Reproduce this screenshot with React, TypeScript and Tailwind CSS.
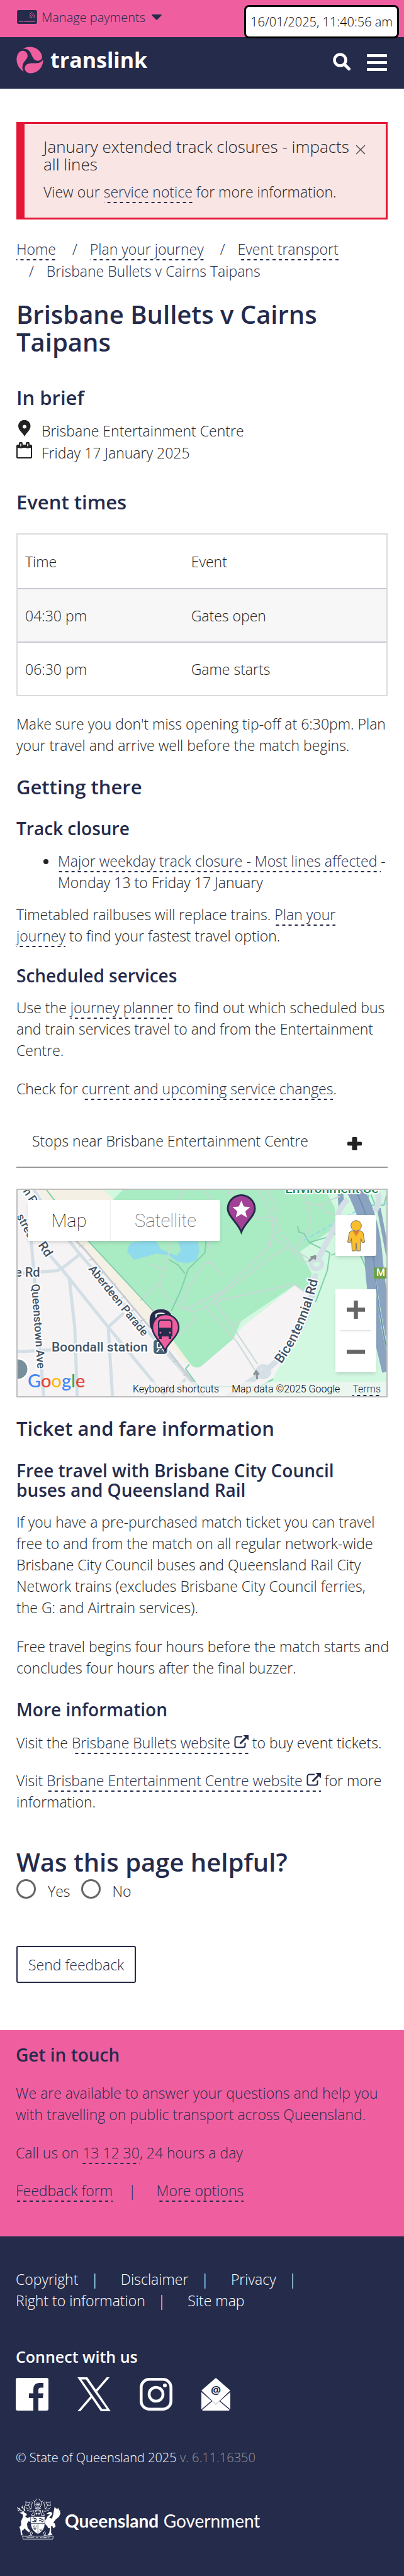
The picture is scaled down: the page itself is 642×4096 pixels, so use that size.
import type { AnchorHTMLAttributes, ReactNode } from "react";

const H2 = "text-[31px] leading-[33px] font-semibold text-[#252b4b]";
const H3 = "text-[28px] leading-[31px] font-semibold text-[#252b4b]";

function DashLink({ children, ...rest }: AnchorHTMLAttributes<HTMLAnchorElement>) {
  return (
    <a
      {...rest}
      className="bg-[linear-gradient(90deg,#252b4b_0_5px,transparent_5px)] bg-[length:10px_2px] bg-repeat-x bg-bottom pb-[2px] text-[#252b4b]"
    >
      {children}
    </a>
  );
}

function Swirl() {
  return (
    <svg viewBox="22 380 236 234" className="h-[43px] w-[43px]" fill="#ef5fa0" aria-hidden="true">
      <path d="M78 400C105 378 165 372 205 402C232 422 250 452 246 478C238 502 212 508 192 500C162 486 158 448 140 424C124 402 100 396 78 400Z" />
      <path d="M80 416C106 418 122 440 120 466C114 496 84 508 76 545C72 565 76 582 86 598C48 576 24 535 24 490C26 445 48 414 80 416Z" />
      <path d="M255 490C260 558 208 612 145 612C114 610 95 592 95 567C98 540 120 527 150 525C185 524 236 532 255 490Z" />
    </svg>
  );
}

function CardIcon() {
  return (
    <svg viewBox="0 0 176 122" className="h-[22px] w-[32px]" aria-hidden="true">
      <rect width="176" height="122" rx="14" fill="#252b4b" />
      <g stroke="#ef5fa0" fill="none" strokeLinecap="round">
        <path d="M20 99h34M64 99h94" strokeWidth="7" />
        <path d="M108 52q9 6 10 18M110 41q20 8 20 29M116 29q27 13 27 41M123 17q34 17 33 53" strokeWidth="5" />
      </g>
    </svg>
  );
}

function External() {
  return (
    <svg viewBox="0 0 23 21" className="ml-[6px] inline-block h-[21px] w-[23px] align-baseline" fill="none" stroke="#252b4b" aria-hidden="true">
      <path d="M13 2.500H4.500A3 3 0 0 0 1.500 5.500V16.500A3 3 0 0 0 4.500 19.500H14.500A3 3 0 0 0 17.500 16.500V12" strokeWidth="2" />
      <path d="M9.500 13.500 19 4" strokeWidth="3" />
      <path d="M14.500 0H23V8.500Z" fill="#252b4b" stroke="none" />
    </svg>
  );
}

function MapDrawing() {
  return (
    <svg viewBox="0 0 586 328" preserveAspectRatio="xMidYMid slice" className="absolute inset-0 h-full w-full" aria-hidden="true">
      <rect width="586" height="328" fill="#f5f3f4" />
      <g transform="translate(-28 -18) scale(.4095 .2362)" className="[&_path]:[vector-effect:non-scaling-stroke]" fill="none" strokeLinejoin="round">
        <path d="M140 70H420L445 145L350 425L600 900L700 1150L745 1240H715L660 1130L570 960L440 690L290 400L200 200Z" fill="#f5f0e4" />
        <path d="M400 70H1510V1480H940L1000 1400L1060 1340L1110 1180L1180 960L1210 760L1145 720L940 1000L905 1080L780 1265H750L680 1110L600 890L350 425L440 140Z" fill="#d2f8e1" />
        <path d="M480 70H1260L1300 200L1300 330L1165 490L1210 640L1200 720L1180 760L1145 715L935 960L905 1080L790 1255Q765 1285 745 1262L680 1110L600 890L345 425L440 140Z" fill="#a9ebc3" />
        <path d="M1145 720L1200 770L1215 830L1110 1180L1050 1290L970 1360L780 1480H700L780 1265L905 1080L940 1000Z" fill="#f5f3f4" />
        <path d="M503 436 550 420H605L625 475 655 500 685 520 702 480 690 422H768L774 485 762 550 725 571 690 560 655 515 608 505 520 547 493 490Z" fill="#90daee" stroke="none" />

        <g stroke="#d3dfe6" strokeWidth="5">
          <path d="M120 400L135 700L170 1480M190 510L240 610L420 1000L610 1400L640 1480M265 410L310 510L600 1080L760 1400L790 1480M68 640L220 620L240 605L310 510M268 660L290 1000L300 1480M68 1165L300 1145L400 1130M480 905L420 1000L437 1480M720 1350L650 1480M130 70L200 260" />
          <path d="M1320 70L1325 200" stroke="#8aa3c0" strokeWidth="9" />
        </g>
        <path d="M290 410L330 480L600 1040L690 1240L800 1480" stroke="#c9ccd0" strokeWidth="3" />
        <path d="M306 460l18-12M346 550l18-12M390 640l18-12M432 720l18-12M470 805l18-12M510 890l18-12M545 960l18-12M672 1235l18-12M712 1325l18-12M755 1410l18-12" stroke="#c9ccd0" strokeWidth="2" />
        <g stroke="#c9d8d8" strokeWidth="2">
          <path d="M718 70L690 140M665 420L655 500L625 690Q620 760 660 820T740 890Q780 890 800 860L825 825L1050 450L1060 270L1000 75M795 75L820 150L858 190M810 420L815 560L860 645V760L720 880L705 830L750 680L795 570H820M1030 75L1060 150L1075 290L1095 380L1150 490L1200 540M1190 160L1240 180Q1270 170 1280 145L1320 120M1170 75L1195 190L1210 320L1145 480M1240 180L1270 230L1310 245M985 268L1050 260M1040 285H1075M1060 400L1120 460L1060 520L830 820L900 990L1000 1250M800 865L920 1100L990 1290M840 850L900 990L935 960M1140 710L1180 760H1210M1140 710L850 820L840 855M585 575L632 612M760 890L755 950L690 1060M545 820L620 700M1115 460L1180 560H1230M890 75L885 110M895 75L910 120M1080 350L1055 400L1040 450" />
        </g>
        <g stroke="#82cfae" strokeWidth="2">
          <path d="M180 75L240 210L345 425L600 900M800 420L795 500L730 610L700 760L665 890M655 545L690 580L718 640M1155 320L1160 360L1180 370L1200 430L1280 500L1270 620L1225 830M1285 515L1310 500M1310 360L1280 390L1200 430M1400 520L1440 680L1480 940L1500 1200M735 1250L720 1280L770 1400H1010L1060 1350" />
          <path d="M1430 110L1425 180H1490L1500 110M1440 110L1455 175" strokeWidth="2" />
        </g>
        <path d="M1180 415L1390 210M1430 178L1500 170" stroke="#92d8ec" strokeWidth="2" strokeDasharray="7 4" />
        <g stroke="#8aa3c0">
          <path d="M1360 75Q1420 270 1430 480Q1440 900 1500 1300" strokeWidth="14" />
          <path d="M1395 75Q1450 240 1465 480Q1480 800 1530 1200" strokeWidth="14" />
          <path d="M1470 200L1510 560" strokeWidth="6" />
          <path d="M1378 75Q1435 260 1448 480Q1460 860 1515 1250" stroke="#6f8fb2" strokeWidth="2" />
        </g>
        <g stroke="#d5dfe6">
          <path d="M1350 140Q1310 200 1310 290L1235 540M1460 75Q1480 150 1455 220M1225 640L1205 830Q1170 1080 1060 1250L1010 1320L940 1400L880 1480" strokeWidth="9" />
          <path d="M1207 575a20 32 0 1 0 42 0a20 32 0 1 0-42 0M1000 1300a22 36 0 1 0 44 0a22 36 0 1 0-44 0" strokeWidth="7" />
        </g>
        <path d="M1198 555L1218 530M1205 530L1224 522L1222 545M998 1350L995 1300M985 1322L994 1295L1004 1320" stroke="#8b9296" strokeWidth="3" />
        <path d="M1451 599H1510V674H1451Z" fill="#6ca23f" stroke="none" />
      </g>

      <g fontFamily="Roboto, sans-serif" fontSize="20" fontWeight="500" fill="#415468" stroke="#fff" strokeWidth="4" strokeLinejoin="round" paintOrder="stroke">
        <text x="-4" y="138">e Rd</text>
        <text transform="translate(112 126) rotate(51)" fontSize="18">Aberdeen Parade</text>
        <text transform="translate(22 150) rotate(86)" fontSize="18">Queenstown Ave</text>
        <text transform="translate(-2 42) rotate(62)" fontSize="18">stree</text>
        <text transform="translate(32 88) rotate(56)">Rd</text>
        <text transform="translate(8 2) rotate(56)" fontSize="18">n P</text>
        <path id="bicentennial" d="M419 277Q463 217 480 130" stroke="none" fill="none" />
        <text fontSize="21"><textPath href="#bicentennial">Bicentennial Rd</textPath></text>
        <text x="54" y="257" fontSize="21">Boondall station</text>
        <text x="425" y="5" fontSize="21" fill="#1c8a60">Environment Ce</text>
        <text transform="translate(233 330) rotate(-45)" fontSize="16" fill="#9aa5ad">Rd</text>
        <text x="570" y="137" fontSize="16" fill="#fff" stroke="none">M</text>
      </g>
      <circle cx="0" cy="285" r="17" fill="#78909c" stroke="#fff" strokeWidth="3" />

      <rect x="215" y="237" width="24" height="25" rx="6" fill="#4b6377" stroke="#fff" strokeWidth="2" />
      <path d="M222 243h6v8h-6zM221 258l4-5M234 258l-4-5" stroke="#fff" strokeWidth="2" fill="none" />
      <path d="M234 254L210 218Q205 190 228 189Q250 190 247 218Z" fill="#252b4b" stroke="#e8efef" strokeWidth="1" />
      <path d="M220 206v-8q8-4 15 0" fill="none" stroke="#fff" strokeWidth="2" />
      <path d="M234 256C230 243 214 232 214 219A20 20 0 0 1 256 219C256 232 239 243 234 256Z" fill="#ef5fa0" stroke="#252b4b" strokeWidth="2.500" />
      <path d="M224 221v-9q0-4 3-5h15q3 1 3 5v9z" fill="#ef5fa0" stroke="#252b4b" strokeWidth="2" />
      <path d="M223 219h23v14h-2v4h-4v-4h-11v4h-4v-4h-2z" fill="#252b4b" />
      <circle cx="227" cy="227" r="1.600" fill="#ef5fa0" />
      <circle cx="242" cy="227" r="1.600" fill="#ef5fa0" />

      <path d="M355.500 67C350 52 334 42 334 30A21.500 21.500 0 0 1 377 30C377 42 361 52 355.500 67Z" fill="#a34196" stroke="#252b4b" strokeWidth="3" />
      <path d="M355.500 17l4 9.500 10 .8-7.600 6.600 2.400 9.800-8.800-5.300-8.800 5.300 2.400-9.800-7.600-6.600 10-.8z" fill="#fff" />
    </svg>
  );
}

function Pegman() {
  return (
    <svg viewBox="0 0 28 50" className="h-[50px] w-[28px]" aria-hidden="true">
      <path d="M6 17h16l3 3 2.500 15-4 1-2-7-1 20h-5.500l-1-13-1 13H7.500L6.500 29l-2 7-4-1L3 20z" fill="#fbbf2d" stroke="#76706a" strokeWidth="1" />
      <path d="M8.500 17h11L14 26z" fill="#e27f2d" />
      <circle cx="14" cy="9" r="8.300" fill="#fbbf2d" stroke="#76706a" strokeWidth="1" />
    </svg>
  );
}

function Crest() {
  return (
    <svg viewBox="22 38 398 372" className="h-[66px] w-[71px]" fill="#fff" aria-hidden="true">
      <path d="M48 170L82 160L115 182L112 194L98 200L118 218L148 205V252L128 246L116 270L122 306L146 334L134 346L108 324L92 310L84 326L70 330L76 372H62L56 318L48 298L64 282L62 250L80 206L78 186L64 178Z" />
      <path d="M78 160L60 148L28 124M44 156L34 142M52 150L48 126M84 160L98 148L66 116M96 156L92 110M80 132L76 106" fill="none" stroke="#fff" strokeWidth="6" />
      <path d="M288 180L316 162Q344 158 342 184L314 216L340 222L350 190L364 116L378 136L386 124L392 140L404 126L402 150L416 148L408 166L418 170L410 190L400 208L374 230L352 258L366 268L372 296L350 308L342 286L332 290V352L344 368L318 374L298 372L316 350L322 310L304 306L298 290L278 270L276 240L290 226Q290 206 322 186Q310 180 288 180Z" />
      <path d="M150 204H276V268Q276 330 214 362Q152 330 150 268Z" stroke="#252b4b" strokeWidth="3" />
      <path d="M152 266H276M214 268V360" stroke="#252b4b" strokeWidth="4" />
      <g stroke="#252b4b" fill="none" strokeWidth="7">
        <path d="M168 222q10-12 16 2q18-6 14 8t-10 10-8-8M164 246q20 12 38-2M226 224q14-8 20 4t18-2M222 246q14-14 24 0t18-8" />
        <path d="M172 284l8 20M187 278v26M202 284l-8 20M174 312h26M178 322h20M226 316l26 18M250 312l-20 26" strokeWidth="4" />
      </g>
      <g fill="none" stroke="#fff" strokeWidth="5">
        <path d="M168 64q18-4 16 20t10 38q20 10 40 0q12-18 10-38t16-20M186 70l20-26M242 70l-22-26M106 68q12 18 38 4q-2 30-20 24l26 42q8-40 14-60l-6-8M106 68q4 28-4 36q16 4 28 0M324 68q-12 18-38 4q2 30 20 24l-26 42q-8-40-14-60l6-8M324 68q-4 28 4 36q-16 4-28 0M104 120q14 22 52 16M328 120q-14 22-52 16M116 146q34 20 60 4q-4 28-22 42l28 2 8-36q24-10 48 0l8 36 28-2q-18-14-22-42q26 16 60-4M184 150q30-14 58 0M186 134q28-12 56 0" />
        <path d="M196 80l14 14M232 80l-14 14M196 112l14-12M232 112l-14-12M192 96h44M214 72v46M202 168v24M194 176h16M224 168v24M216 176h16" />
        <path d="M82 378q64 10 84-24q-12-28-20 0q0 20 30 28M346 378q-64 10-84-24q12-28 20 0q0 20-30 28" />
        <path d="M76 380H352L346 406H82Z" />
        <path d="M114 393h68M198 393h20M236 393h80" strokeWidth="8" strokeDasharray="7 4" />
      </g>
    </svg>
  );
}

function Crumb({ children }: { children: ReactNode }) {
  return (
    <>
      {" "}
      <li className="inline-block before:px-[20px] before:content-['/']">{children}</li>
    </>
  );
}

const times = [
  ["04:30 pm", "Gates open"],
  ["06:30 pm", "Game starts"],
];

export default function App() {
  return (
    <div className="relative bg-white font-['Open_Sans',sans-serif] text-[23px] leading-[34px] font-light text-[#222]">
      <div className="flex h-[59px] items-start bg-[#ef5fa0] px-[26px] pt-[11px] text-[20px] text-[#252b4b]">
        <button type="button" className="flex items-start">
          <span className="mt-[5px] ml-[1px]"><CardIcon /></span>
          <span className="ml-[7px]">Manage payments</span>
          <svg viewBox="0 0 16 9" className="mt-[12px] ml-[10px] h-[9px] w-[16px]" fill="#252b4b" aria-hidden="true">
            <path d="M1 0H15Q16.500 .5 15.500 1.500L9 8.300Q8 9 7 8.300L.5 1.500Q-.5 .5 1 0Z" />
          </svg>
        </button>
      </div>
      <time className="absolute top-[8px] right-[8px] flex h-[53px] items-center rounded-[8px] border-[3px] border-black bg-white px-[7px] text-[20px] text-black">
        16/01/2025, 11:40:56 am
      </time>

      <header className="flex h-[82px] items-start justify-between bg-[#252b4b] pr-[27px] pl-[26px]">
        <a href="#" className="mt-[15px] flex items-center gap-[11px] text-[34px] leading-[43px] font-bold text-white">
          <Swirl />
          <span>translink</span>
        </a>
        <div className="mt-[25px] flex items-start gap-[26px]">
          <button type="button" aria-label="Search">
            <svg viewBox="0 0 28 28" className="h-[28px] w-[28px]" fill="none" stroke="#fff" aria-hidden="true">
              <circle cx="11.500" cy="11.500" r="9" strokeWidth="4.500" />
              <path d="M18.500 18.500L25.500 25.500" strokeWidth="5" strokeLinecap="round" />
            </svg>
          </button>
          <button type="button" aria-label="Menu" className="mt-[2px] flex w-[32px] flex-col gap-[6px]">
            <span className="h-[5px] rounded-[1px] bg-white" />
            <span className="h-[5px] rounded-[1px] bg-white" />
            <span className="h-[5px] rounded-[1px] bg-white" />
          </button>
        </div>
      </header>

      <main className="px-[26px] pt-[53px] pb-[75px]">
        <section className="relative border-[3px] border-l-[13px] border-[#e31735] bg-[#f9e5e4] pt-[22px] pr-[50px] pb-[24px] pl-[30px]">
          <h2 className="text-[26px] leading-[28px]">January extended track closures - impacts all lines</h2>
          <p className="mt-[13px]">
            View our <DashLink href="#">service notice</DashLink> for more information.
          </p>
          <button type="button" aria-label="Close" className="absolute top-[33px] right-[32px]">
            <svg viewBox="0 0 16 16" className="h-[16px] w-[16px]" stroke="#555" strokeWidth="1.500" aria-hidden="true">
              <path d="M1 1L15 15M15 1L1 15" />
            </svg>
          </button>
        </section>

        <nav aria-label="Breadcrumb" className="mt-[30px] leading-[35px] text-[#252b4b]">
          <ol>
            <li className="inline"><DashLink href="#">Home</DashLink></li>
            <Crumb><DashLink href="#">Plan your journey</DashLink></Crumb>
            <Crumb><DashLink href="#">Event transport</DashLink></Crumb>
            <Crumb>Brisbane Bullets v Cairns Taipans</Crumb>
          </ol>
        </nav>

        <h1 className="mt-[29px] text-[40px] leading-[44px] font-semibold text-[#252b4b]">Brisbane Bullets v Cairns Taipans</h1>

        <h2 className={`mt-[50px] ${H2}`}>In brief</h2>
        <div className="mt-[19px] leading-[35px]">
          <div className="flex gap-[15px]">
            <svg viewBox="0 0 25 26" className="h-[26px] w-[25px]" fill="#222" aria-hidden="true">
              <path fillRule="evenodd" d="M13 26C10 20 3 16 3 9.500A9.700 9.700 0 0 1 22.500 9.500C22.500 16 16 20 13 26ZM13 7.500a3 3 0 1 0 .01 0Z" />
            </svg>
            <span>Brisbane Entertainment Centre</span>
          </div>
          <div className="flex gap-[15px]">
            <svg viewBox="0 0 25 26" className="h-[26px] w-[25px]" aria-hidden="true">
              <path d="M2 4H23Q25 4 25 6V24Q25 26 23 26H2Q0 26 0 24V6Q0 4 2 4Z" fill="#222" />
              <rect x="2" y="9" width="21" height="15" fill="#fff" />
              <path d="M7 7V2.500M18 7V2.500" stroke="#222" strokeWidth="6" strokeLinecap="round" />
              <path d="M7 6V3M18 6V3" stroke="#fff" strokeWidth="1.500" strokeLinecap="round" />
            </svg>
            <span>Friday 17 January 2025</span>
          </div>
        </div>

        <h2 className={`mt-[44px] ${H2}`}>Event times</h2>
        <table className="mt-[33px] w-full border-separate border-spacing-0 border-2 border-[#dcdcde] text-left">
          <thead>
            <tr>
              <th scope="col" className="h-[85px] w-[45%] px-[12px] font-light">Time</th>
              <th scope="col" className="px-[12px] font-light">Event</th>
            </tr>
          </thead>
          <tbody>
            {times.map(([time, event]) => (
              <tr key={time} className="odd:bg-[#f7f7f7]">
                <td className="h-[85px] border-t-2 border-[#c9c8d3] px-[12px]">{time}</td>
                <td className="border-t-2 border-[#c9c8d3] px-[12px]">{event}</td>
              </tr>
            ))}
          </tbody>
        </table>
        <p className="mt-[27px]">
          Make sure you don't miss opening tip-off at 6:30pm. Plan your travel and arrive well before the match begins.
        </p>

        <h2 className={`mt-[33px] ${H2}`}>Getting there</h2>
        <h3 className={`mt-[34px] ${H3}`}>Track closure</h3>
        <ul className="mt-[19px] list-disc pl-[66px]">
          <li>
            <DashLink href="#">Major weekday track closure - Most lines affected </DashLink>- Monday 13 to Friday 17 January
          </li>
        </ul>
        <p className="mt-[17px]">
          Timetabled railbuses will replace trains. <DashLink href="#">Plan your journey</DashLink> to find your fastest travel option.
        </p>

        <h3 className={`mt-[31px] ${H3}`}>Scheduled services</h3>
        <p className="mt-[18px]">
          Use the <DashLink href="#">journey planner</DashLink> to find out which scheduled bus and train services travel to and from the Entertainment Centre.
        </p>
        <p className="mt-[27px]">
          Check for <DashLink href="#">current and upcoming service changes</DashLink>.
        </p>

        <button type="button" className="mt-[26px] flex w-full items-center justify-between border-b-2 border-[#999] pt-[23px] pr-[41px] pb-[24px] pl-[25px] text-left">
          <span>Stops near Brisbane Entertainment Centre</span>
          <svg viewBox="0 0 23 21" className="mt-[8px] h-[21px] w-[23px]" fill="#222" aria-hidden="true">
            <rect x="7.500" width="8" height="21" rx="1.500" />
            <rect y="7.500" width="23" height="6" rx="1.500" />
          </svg>
        </button>

        <section aria-label="Map" className="relative mt-[33px] h-[332px] overflow-hidden border-2 border-[#bdbdbd] font-[Roboto,sans-serif]">
          <MapDrawing />
          <div className="absolute top-[16px] left-[16px] flex h-[65px] rounded-[3px] bg-white text-[29px] shadow-md">
            <button type="button" className="w-[132px] border-r border-[#eee] font-thin text-black">Map</button>
            <button type="button" className="w-[174px] font-thin text-[#565656]">Satellite</button>
          </div>
          <button type="button" aria-label="Street View" className="absolute top-[40px] right-[16px] flex h-[65px] w-[65px] items-center justify-center rounded-[3px] bg-white shadow-md">
            <Pegman />
          </button>
          <div className="absolute top-[158px] right-[16px] flex h-[132px] w-[65px] flex-col items-center bg-white shadow-md">
            <button type="button" aria-label="Zoom in" className="flex h-[65px] w-full items-center justify-center">
              <svg viewBox="0 0 29 29" className="h-[29px] w-[29px]" stroke="#666" strokeWidth="6.500" aria-hidden="true"><path d="M0 14.500H29M14.500 0V29" /></svg>
            </button>
            <span className="h-[2px] w-[49px] bg-[#e6e6e6]" />
            <button type="button" aria-label="Zoom out" className="flex h-[65px] w-full items-center justify-center">
              <svg viewBox="0 0 29 29" className="h-[29px] w-[29px]" stroke="#666" strokeWidth="6.500" aria-hidden="true"><path d="M0 14.500H29" /></svg>
            </button>
          </div>
          <div className="absolute bottom-[5px] left-[16px] text-[29px] leading-[40px] font-[Lato,sans-serif] font-medium">
            <span className="text-[#4285f4]">G</span>
            <span className="text-[#ea4335]">o</span>
            <span className="text-[#fbbc05]">o</span>
            <span className="text-[#4285f4]">g</span>
            <span className="text-[#34a853]">l</span>
            <span className="text-[#ea4335]">e</span>
          </div>
          <div className="absolute right-0 bottom-0 flex h-[23px] gap-[20px] bg-[#f5f5f5]/70 pr-[9px] pl-[10px] text-[16px] leading-[23px] font-light text-black">
            <button type="button">Keyboard shortcuts</button>
            <span>Map data ©2025 Google</span>
            <DashLink href="#">Terms</DashLink>
          </div>
        </section>

        <h2 className={`mt-[33px] ${H2}`}>Ticket and fare information</h2>
        <h3 className={`mt-[35px] ${H3}`}>Free travel with Brisbane City Council buses and Queensland Rail</h3>
        <p className="mt-[18px]">
          If you have a pre-purchased match ticket you can travel free to and from the match on all regular network-wide Brisbane City Council buses and Queensland Rail City Network trains (excludes Brisbane City Council ferries, the G: and Airtrain services).
        </p>
        <p className="-mr-[12px] mt-[28px]">
          Free travel begins four hours before the match starts and concludes four hours after the final buzzer.
        </p>

        <h3 className={`mt-[34px] ${H3}`}>More information</h3>
        <p className="mt-[20px]">
          Visit the <DashLink href="#">Brisbane Bullets website<External /></DashLink> to buy event tickets.
        </p>
        <p className="mt-[26px]">
          Visit <DashLink href="#">Brisbane Entertainment Centre website<External /></DashLink> for more information.
        </p>

        <form className="mt-[57px]">
          <fieldset>
            <legend className="text-[40px] leading-[44px] font-semibold text-[#252b4b]">Was this page helpful?</legend>
            <div className="mt-[5px] flex items-start gap-[17px]">
              <label className="flex gap-[19px]">
                <input type="radio" name="helpful" className="h-[31px] w-[31px] appearance-none rounded-full border-[3px] border-[#666] checked:bg-[#666]" />
                <span className="mt-[2px]">Yes</span>
              </label>
              <label className="flex gap-[19px]">
                <input type="radio" name="helpful" className="h-[31px] w-[31px] appearance-none rounded-full border-[3px] border-[#666] checked:bg-[#666]" />
                <span className="mt-[2px]">No</span>
              </label>
            </div>
          </fieldset>
          <button type="button" className="mt-[70px] block h-[59px] rounded-[3px] border-2 border-[#252b4b] px-[17px] text-[#252b4b]">Send feedback</button>
        </form>
      </main>

      <section className="bg-[#ef5fa0] px-[25px] pt-[24px] pb-[56px] text-[#252b4b]">
        <h2 className="text-[28px] leading-[31px] font-semibold">Get in touch</h2>
        <p className="mt-[28px]">We are available to answer your questions and help you with travelling on public transport across Queensland.</p>
        <p className="mt-[27px]">Call us on <DashLink href="#">13 12 30</DashLink>, 24 hours a day</p>
        <p className="mt-[26px]">
          <DashLink href="#">Feedback form</DashLink>
          <span className="pr-[32px] pl-[25px]">|</span>
          <DashLink href="#">More options</DashLink>
        </p>
      </section>

      <footer className="bg-[#252b4b] px-[25px] pt-[51px] pb-[58px] text-white">
        <ul className="flex flex-wrap">
          {["Copyright", "Disclaimer", "Privacy", "Right to information"].map((label) => (
            <li key={label} className="pr-[35px] after:pl-[20px] after:content-['|']"><a href="#">{label}</a></li>
          ))}
          <li><a href="#">Site map</a></li>
        </ul>
        <h2 className="mt-[55px] text-[25px] leading-[34px] font-semibold">Connect with us</h2>
        <div className="mt-[16px] flex items-center gap-[46px]">
          <a href="#" aria-label="Facebook">
            <svg viewBox="0 0 52 52" className="h-[52px] w-[52px]" fill="#fff" aria-hidden="true">
              <path d="M3 0H49Q52 0 52 3V49Q52 52 49 52H36V32H43L44 24.500H36V19Q36 15.500 40 15.500H44V8H37.500Q28 8.500 28 18V24.500H21V32H28V52H3Q0 52 0 49V3Q0 0 3 0Z" />
            </svg>
          </a>
          <a href="#" aria-label="X">
            <svg viewBox="0 0 1200 1227" className="h-[54px] w-[53px]" fill="#fff" aria-hidden="true">
              <path d="M714.163 519.284L1160.890 0H1055.030L667.137 450.887L357.328 0H0L468.492 681.821L0 1226.370H105.866L515.491 750.218L842.672 1226.370H1200L714.137 519.284H714.163ZM569.165 687.828L521.697 619.934L144.011 79.694H306.615L611.412 515.685L658.880 583.579L1055.080 1150.300H892.476L569.165 687.854V687.828Z" />
            </svg>
          </a>
          <a href="#" aria-label="Instagram">
            <svg viewBox="0 0 52 52" className="h-[52px] w-[52px]" fill="none" stroke="#fff" aria-hidden="true">
              <rect x="2.300" y="2.300" width="47.400" height="47.400" rx="13" strokeWidth="4.600" />
              <circle cx="26" cy="26" r="11" strokeWidth="4.600" />
              <circle cx="40" cy="12" r="3.100" fill="#fff" stroke="none" />
            </svg>
          </a>
          <a href="#" aria-label="Email newsletter">
            <svg viewBox="0 0 46 52" className="h-[52px] w-[46px]" fill="#fff" aria-hidden="true">
              <path d="M23 0L46 20L23 42L0 20ZM0 22.500L16 36.500L0 50ZM46 22.500L30 36.500L46 50ZM17.500 37L23 42.500L28.500 37L45 51Q44 52 43 52H3Q2 52 1 51Z" />
              <text x="23" y="26" textAnchor="middle" fontFamily="Open Sans, sans-serif" fontWeight="700" fontSize="18" fill="#252b4b">@</text>
            </svg>
          </a>
        </div>
        <p className="mt-[57px] text-[20px]">
          © State of Queensland 2025 <span className="text-[#999]">v. 6.11.16350</span>
        </p>
        <a href="#" className="mt-[47px] flex items-start gap-[6px] pl-[1px] font-[Lato,sans-serif] text-[28px]">
          <Crest />
          <span className="mt-[19px]"><b className="font-bold">Queensland</b> <span className="font-normal">Government</span></span>
        </a>
      </footer>
    </div>
  );
}
